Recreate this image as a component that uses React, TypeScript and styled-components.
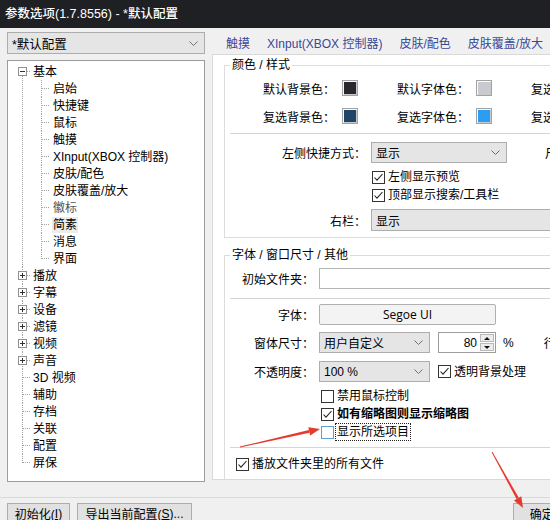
import React from 'react'
import styled, { createGlobalStyle } from 'styled-components'

const GlobalStyle = createGlobalStyle`
  html, body {
    margin: 0;
    padding: 0;
    background: #f0f0f0;
  }
  body {
    font-family: "Liberation Sans", "Noto Sans CJK SC", sans-serif;
    font-size: 12px;
    color: #000;
  }
  * {
    box-sizing: border-box;
  }
`

const Window = styled.div`
  position: relative;
  width: 550px;
  height: 520px;
  overflow: hidden;
  background: #f0f0f0;
`

const TitleBar = styled.div`
  height: 28px;
  padding-left: 5px;
  background: #1f2023;
  color: #fff;
  font-size: 12.5px;
  font-weight: 500;
  line-height: 28px;
  white-space: nowrap;
`

const Body = styled.div`
  display: flex;
  gap: 7px;
  padding: 4px 0 0 7px;
`

const LeftColumn = styled.div`
  display: flex;
  flex-direction: column;
  gap: 6px;
  width: 198px;
  flex-shrink: 0;
`

const RightColumn = styled.div`
  display: flex;
  flex-direction: column;
  width: 420px;
  flex-shrink: 0;
  margin-top: -2px;
`

const Combo = styled.div<{ $w?: number; $h?: number; $size?: number }>`
  display: flex;
  align-items: center;
  justify-content: space-between;
  width: ${(p) => (p.$w ? `${p.$w}px` : '100%')};
  height: ${(p) => p.$h ?? 21}px;
  padding: 0 6px 0 4px;
  background: #e5e5e5;
  border: 1px solid #adadad;
  font-size: ${(p) => p.$size ?? 12}px;
  white-space: nowrap;
  flex-shrink: 0;
`

const Chevron = () => (
  <svg width="9" height="5" viewBox="0 0 9 5">
    <polyline points="0.5,0.5 4.5,4.5 8.5,0.5" fill="none" stroke="#707070" strokeWidth="1" />
  </svg>
)

/* ---------- tree ---------- */

const TreeBox = styled.div`
  height: 422px;
  padding-top: 2px;
  background: #fff;
  border: 1px solid #9c9c9c;
  overflow: hidden;
`

const Nodes = styled.ul`
  list-style: none;
  margin: 0;
  padding: 0;
`

const Node = styled.li<{ $line: number; $first?: boolean; $last?: boolean }>`
  position: relative;
  &::before {
    content: '';
    position: absolute;
    left: ${(p) => p.$line}px;
    top: ${(p) => (p.$first ? 8 : 0)}px;
    ${(p) => (p.$last ? 'height: 9px;' : 'bottom: 0;')}
    border-left: 1px dotted #a3a3a3;
  }
  &::after {
    content: '';
    position: absolute;
    left: ${(p) => p.$line}px;
    top: 8px;
    width: 8px;
    border-top: 1px dotted #a3a3a3;
  }
`

const NodeRow = styled.div<{ $indent: number }>`
  position: relative;
  display: flex;
  align-items: center;
  height: 17px;
  padding-left: ${(p) => p.$indent}px;
  white-space: nowrap;
`

const NodeText = styled.span<{ $dim?: boolean; $hot?: boolean }>`
  padding: 0 1px;
  line-height: 16px;
  color: ${(p) => (p.$dim ? '#555' : '#000')};
  background: ${(p) => (p.$hot ? '#ececec' : 'transparent')};
`

const ExpandBox = styled.span`
  position: absolute;
  left: 10px;
  top: 4px;
  width: 9px;
  height: 9px;
  z-index: 1;
  display: flex;
`

const Expander = ({ open }: { open?: boolean }) => (
  <ExpandBox>
    <svg width="9" height="9" viewBox="0 0 9 9">
      <rect x="0.5" y="0.5" width="8" height="8" fill="#fff" stroke="#919191" />
      <line x1="2" y1="4.5" x2="7" y2="4.5" stroke="#333" />
      {!open && <line x1="4.5" y1="2" x2="4.5" y2="7" stroke="#333" />}
    </svg>
  </ExpandBox>
)

interface TreeEntry {
  label: string
  expandable?: boolean
  children?: string[]
}

const tree: TreeEntry[] = [
  {
    label: '基本',
    expandable: true,
    children: ['启始', '快捷键', '鼠标', '触摸', 'XInput(XBOX 控制器)', '皮肤/配色', '皮肤覆盖/放大', '徽标', '简素', '消息', '界面'],
  },
  { label: '播放', expandable: true },
  { label: '字幕', expandable: true },
  { label: '设备', expandable: true },
  { label: '滤镜', expandable: true },
  { label: '视频', expandable: true },
  { label: '声音', expandable: true },
  { label: '3D 视频' },
  { label: '辅助' },
  { label: '存档' },
  { label: '关联' },
  { label: '配置' },
  { label: '屏保' },
]

const Tree = () => (
  <TreeBox>
    <Nodes>
      {tree.map((item, i) => (
        <Node key={item.label} $line={14} $first={i === 0} $last={i === tree.length - 1}>
          <NodeRow $indent={24}>
            {item.expandable && <Expander open={!!item.children} />}
            <NodeText>{item.label}</NodeText>
          </NodeRow>
          {item.children && (
            <Nodes>
              {item.children.map((child, j) => (
                <Node key={child} $line={33} $last={j === item.children!.length - 1}>
                  <NodeRow $indent={44}>
                    <NodeText $dim={child === '徽标'} $hot={child === '简素'}>
                      {child}
                    </NodeText>
                  </NodeRow>
                </Node>
              ))}
            </Nodes>
          )}
        </Node>
      ))}
    </Nodes>
  </TreeBox>
)

/* ---------- right side ---------- */

const Tabs = styled.div`
  display: flex;
  align-items: center;
  gap: 17px;
  height: 24px;
  padding-left: 14px;
  color: #3a4896;
  white-space: nowrap;
`

const Panel = styled.div`
  height: 426px;
  padding-top: 3px;
  background: #fff;
  border: 1px solid #d9d9d9;
  border-right: none;
  overflow: hidden;
`

const Group = styled.fieldset<{ $gap?: number; $open?: boolean }>`
  margin: ${(p) => p.$gap ?? 0}px 0 0 11px;
  padding: 0 0 ${(p) => (p.$open ? 60 : 6)}px 0;
  min-width: 0;
  border: 1px solid #dcdcdc;
  border-right: none;
`

const Legend = styled.legend`
  margin-left: 5px;
  padding: 0 2px;
  font-size: 12px;
  line-height: 14px;
`

const ColorGrid = styled.div`
  display: grid;
  grid-template-columns: repeat(3, 134px);
  grid-auto-rows: 16px;
  row-gap: 12px;
  padding: 8px 0 0 38px;
`

const ColorCell = styled.div`
  display: flex;
  align-items: center;
  white-space: nowrap;
`

const ColorLabel = styled.span`
  width: 79px;
  flex-shrink: 0;
`

const Swatch = styled.span<{ $color: string }>`
  width: 16px;
  height: 16px;
  background: ${(p) => p.$color};
  border: 1px solid #a2a2a2;
  box-shadow: inset 1px 1px 0 #fafafa, inset -1px -1px 0 #c9c9c9;
  flex-shrink: 0;
`

const Divider = styled.div<{ $gap: number }>`
  height: 1px;
  margin: ${(p) => p.$gap}px 0 0 5px;
  background: #d4d4d4;
`

const FormRow = styled.div<{ $label: number; $gap?: number }>`
  display: grid;
  grid-template-columns: ${(p) => p.$label}px 1fr;
  column-gap: 5px;
  align-items: center;
  margin-top: ${(p) => p.$gap ?? 0}px;
  white-space: nowrap;
`

const FieldLabel = styled.span`
  text-align: right;
`

const Controls = styled.div`
  display: flex;
  align-items: center;
  gap: 8px;
  white-space: nowrap;
`

const Aside = styled.span<{ $gap: number }>`
  margin-left: ${(p) => p.$gap}px;
`

const TextInput = styled.div`
  height: 21px;
  background: #fff;
  border: 1px solid #b4b4b4;
  border-right: none;
`

const FontButton = styled.div`
  display: flex;
  align-items: center;
  justify-content: center;
  width: 177px;
  height: 21px;
  background: #f3f3f3;
  border: 1px solid #b0b0b0;
  border-radius: 2px;
  font-family: "Open Sans", "Noto Sans", sans-serif;
`

const Spin = styled.div`
  display: flex;
  align-items: center;
  justify-content: flex-end;
  gap: 3px;
  width: 58px;
  height: 21px;
  padding-right: 1px;
  background: #fff;
  border: 1px solid #9d9d9d;
`

const SpinButtons = styled.div`
  display: flex;
  flex-direction: column;
  gap: 1px;
`

const SpinButton = styled.span`
  display: flex;
  align-items: center;
  justify-content: center;
  width: 14px;
  height: 8px;
  background: #ececec;
  border: 1px solid #b9b9b9;
`

const CheckRow = styled.label<{ $indent: number; $gap?: number; $bold?: boolean }>`
  display: flex;
  align-items: center;
  gap: 2px;
  height: 18px;
  margin-top: ${(p) => p.$gap ?? 0}px;
  padding-left: ${(p) => p.$indent}px;
  font-weight: ${(p) => (p.$bold ? 700 : 400)};
  white-space: nowrap;
`

const Box = styled.span<{ $focus?: boolean }>`
  display: flex;
  width: 13px;
  height: 13px;
  flex-shrink: 0;
  background: #fff;
  border: 1px solid ${(p) => (p.$focus ? '#5b9fd4' : '#333')};
`

const CheckText = styled.span<{ $focus?: boolean }>`
  padding: 0 1px;
  line-height: 16px;
  outline: ${(p) => (p.$focus ? '1px dotted #222' : 'none')};
`

const Check = ({ checked, focus, children }: { checked?: boolean; focus?: boolean; children: React.ReactNode }) => (
  <>
    <Box $focus={focus}>
      {checked && (
        <svg width="11" height="11" viewBox="0 0 11 11">
          <polyline points="1.5,5.5 4,8.2 9.5,2" fill="none" stroke="#222" strokeWidth="1.1" />
        </svg>
      )}
    </Box>
    <CheckText $focus={focus}>{children}</CheckText>
  </>
)

/* ---------- footer ---------- */

const Footer = styled.div`
  display: flex;
  justify-content: space-between;
  width: 759px;
  margin-top: 15px;
  padding: 5px 7px 0;
  border-top: 1px solid #dadada;
`

const ButtonGroup = styled.div`
  display: flex;
  gap: 7px;
`

const Button = styled.div<{ $w?: number }>`
  display: flex;
  align-items: center;
  justify-content: center;
  width: ${(p) => (p.$w ? `${p.$w}px` : 'auto')};
  height: 23px;
  padding: 0 8px 2px;
  background: #e1e1e1;
  border: 1px solid #adadad;
  white-space: nowrap;
`

/* ---------- annotation arrows ---------- */

const Overlay = styled.svg`
  position: absolute;
  top: 0;
  left: 0;
  pointer-events: none;
`

const Arrow = ({ x1, y1, x2, y2 }: { x1: number; y1: number; x2: number; y2: number }) => {
  const len = Math.hypot(x2 - x1, y2 - y1)
  const ux = (x2 - x1) / len
  const uy = (y2 - y1) / len
  const nx = -uy
  const ny = ux
  const bx = x2 - ux * 11
  const by = y2 - uy * 11
  const pt = (x: number, y: number) => `${x.toFixed(1)},${y.toFixed(1)}`
  const shaft = [
    pt(x1 + nx * 0.5, y1 + ny * 0.5),
    pt(bx + nx * 1.3, by + ny * 1.3),
    pt(bx - nx * 1.3, by - ny * 1.3),
    pt(x1 - nx * 0.5, y1 - ny * 0.5),
  ].join(' ')
  const head = [pt(x2, y2), pt(bx + nx * 4.2, by + ny * 4.2), pt(bx - nx * 4.2, by - ny * 4.2)].join(' ')
  return (
    <g fill="#e53b2f">
      <polygon points={shaft} />
      <polygon points={head} />
    </g>
  )
}

export default function App() {
  return (
    <>
      <GlobalStyle />
      <Window>
        <TitleBar>参数选项(1.7.8556) - *默认配置</TitleBar>
        <Body>
          <LeftColumn>
            <Combo $h={22} $size={12.5}>
              <span>*默认配置</span>
              <Chevron />
            </Combo>
            <Tree />
          </LeftColumn>

          <RightColumn>
            <Tabs>
              <span>触摸</span>
              <span>XInput(XBOX 控制器)</span>
              <span>皮肤/配色</span>
              <span>皮肤覆盖/放大</span>
            </Tabs>
            <Panel>
              <Group>
                <Legend>颜色 / 样式</Legend>
                <ColorGrid>
                  <ColorCell>
                    <ColorLabel>默认背景色：</ColorLabel>
                    <Swatch $color="#29282e" />
                  </ColorCell>
                  <ColorCell>
                    <ColorLabel>默认字体色：</ColorLabel>
                    <Swatch $color="#c9c9d1" />
                  </ColorCell>
                  <ColorCell>
                    <ColorLabel>复选边框色：</ColorLabel>
                    <Swatch $color="#555" />
                  </ColorCell>
                  <ColorCell>
                    <ColorLabel>复选背景色：</ColorLabel>
                    <Swatch $color="#204567" />
                  </ColorCell>
                  <ColorCell>
                    <ColorLabel>复选字体色：</ColorLabel>
                    <Swatch $color="#2b9df5" />
                  </ColorCell>
                  <ColorCell>
                    <ColorLabel>复选高亮色：</ColorLabel>
                    <Swatch $color="#888" />
                  </ColorCell>
                </ColorGrid>
                <Divider $gap={9} />
                <FormRow $label={141} $gap={8}>
                  <FieldLabel>左侧快捷方式：</FieldLabel>
                  <Controls>
                    <Combo $w={136}>
                      <span>显示</span>
                      <Chevron />
                    </Combo>
                    <Aside $gap={30}>尺寸：</Aside>
                  </Controls>
                </FormRow>
                <CheckRow $indent={147} $gap={5}>
                  <Check checked>左侧显示预览</Check>
                </CheckRow>
                <CheckRow $indent={147}>
                  <Check checked>顶部显示搜索/工具栏</Check>
                </CheckRow>
                <FormRow $label={141} $gap={5}>
                  <FieldLabel>右栏：</FieldLabel>
                  <Combo $h={22}>
                    <span>显示</span>
                  </Combo>
                </FormRow>
              </Group>

              <Group $gap={10} $open>
                <Legend>字体 / 窗口尺寸 / 其他</Legend>
                <FormRow $label={89} $gap={6}>
                  <FieldLabel>初始文件夹：</FieldLabel>
                  <TextInput />
                </FormRow>
                <Divider $gap={9} />
                <FormRow $label={89} $gap={5}>
                  <FieldLabel>字体：</FieldLabel>
                  <Controls>
                    <FontButton>Segoe UI</FontButton>
                  </Controls>
                </FormRow>
                <FormRow $label={89} $gap={7}>
                  <FieldLabel>窗体尺寸：</FieldLabel>
                  <Controls>
                    <Combo $w={111}>
                      <span>用户自定义</span>
                      <Chevron />
                    </Combo>
                    <Spin>
                      <span>80</span>
                      <SpinButtons>
                        <SpinButton>
                          <svg width="6" height="3" viewBox="0 0 6 3">
                            <polygon points="0,3 3,0 6,3" fill="#111" />
                          </svg>
                        </SpinButton>
                        <SpinButton>
                          <svg width="6" height="3" viewBox="0 0 6 3">
                            <polygon points="0,0 6,0 3,3" fill="#111" />
                          </svg>
                        </SpinButton>
                      </SpinButtons>
                    </Spin>
                    <Aside $gap={-1}>%</Aside>
                    <Aside $gap={22}>行距：</Aside>
                  </Controls>
                </FormRow>
                <FormRow $label={89} $gap={8}>
                  <FieldLabel>不透明度：</FieldLabel>
                  <Controls>
                    <Combo $w={111}>
                      <span>100 %</span>
                      <Chevron />
                    </Combo>
                    <CheckRow $indent={0}>
                      <Check checked>透明背景处理</Check>
                    </CheckRow>
                  </Controls>
                </FormRow>
                <CheckRow $indent={96} $gap={5}>
                  <Check>禁用鼠标控制</Check>
                </CheckRow>
                <CheckRow $indent={96} $bold>
                  <Check checked>如有缩略图则显示缩略图</Check>
                </CheckRow>
                <CheckRow $indent={96}>
                  <Check focus>显示所选项目</Check>
                </CheckRow>
                <Divider $gap={6} />
                <CheckRow $indent={11} $gap={7}>
                  <Check checked>播放文件夹里的所有文件</Check>
                </CheckRow>
              </Group>
            </Panel>
          </RightColumn>
        </Body>

        <Footer>
          <ButtonGroup>
            <Button $w={63}>
              初始化(<u>I</u>)
            </Button>
            <Button $w={115}>
              导出当前配置(<u>S</u>)...
            </Button>
          </ButtonGroup>
          <ButtonGroup>
            <Button $w={75}>
              确定(<u>O</u>)
            </Button>
            <Button $w={75}>
              取消(<u>C</u>)
            </Button>
            <Button $w={75}>
              应用(<u>A</u>)
            </Button>
          </ButtonGroup>
        </Footer>

        <Overlay width="550" height="520" viewBox="0 0 550 520">
          <Arrow x1={240} y1={447} x2={320} y2={429} />
          <Arrow x1={492} y1={452} x2={523} y2={508} />
        </Overlay>
      </Window>
    </>
  )
}
